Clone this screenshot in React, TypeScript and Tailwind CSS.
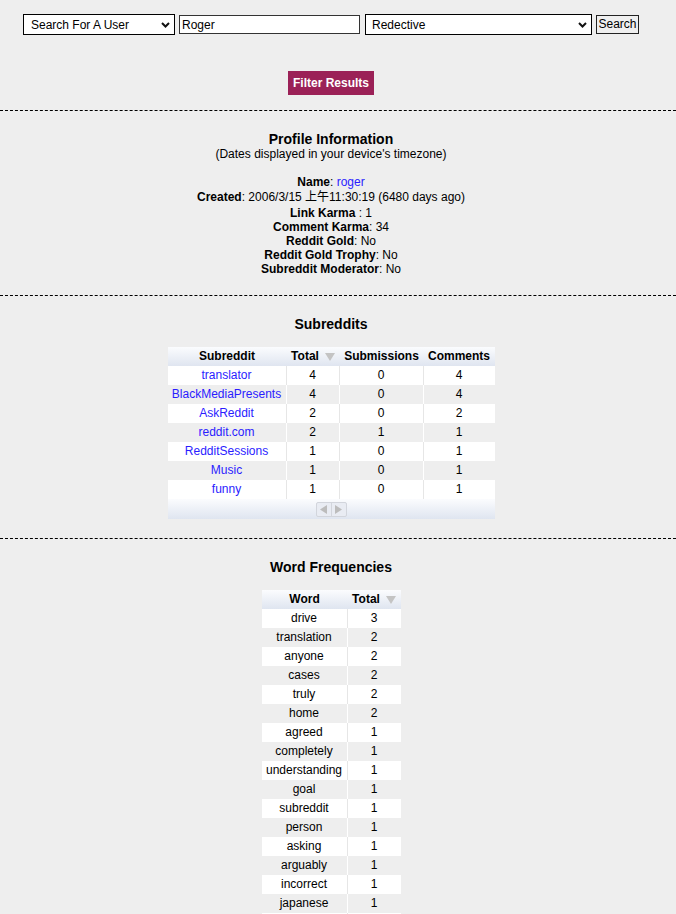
import React from "react";

const subreddits = [
  { name: "translator", total: 4, subs: 0, comments: 4 },
  { name: "BlackMediaPresents", total: 4, subs: 0, comments: 4 },
  { name: "AskReddit", total: 2, subs: 0, comments: 2 },
  { name: "reddit.com", total: 2, subs: 1, comments: 1 },
  { name: "RedditSessions", total: 1, subs: 0, comments: 1 },
  { name: "Music", total: 1, subs: 0, comments: 1 },
  { name: "funny", total: 1, subs: 0, comments: 1 },
];

const words: [string, number][] = [
  ["drive", 3],
  ["translation", 2],
  ["anyone", 2],
  ["cases", 2],
  ["truly", 2],
  ["home", 2],
  ["agreed", 1],
  ["completely", 1],
  ["understanding", 1],
  ["goal", 1],
  ["subreddit", 1],
  ["person", 1],
  ["asking", 1],
  ["arguably", 1],
  ["incorrect", 1],
  ["japanese", 1],
  ["language", 1],
  ["write", 1],
];

function Chevron() {
  return (
    <svg
      className="pointer-events-none absolute right-[5px] top-[8px]"
      width="9"
      height="6"
      viewBox="0 0 9 6"
    >
      <path d="M1 1l3.5 3.5L8 1" fill="none" stroke="#111" strokeWidth="2" />
    </svg>
  );
}

function SortArrow() {
  return (
    <svg width="10" height="8" viewBox="0 0 10 8" className="ml-[6px] inline-block">
      <polygon points="0,0 10,0 5,8" fill="#c4c4c4" />
    </svg>
  );
}

function Rule() {
  return <div className="h-0 w-full border-t border-dashed border-black" />;
}

function Line({ label, children }: { label: string; children: React.ReactNode }) {
  return (
    <div className="leading-[14px]">
      <span className="font-bold">{label}</span>
      {children}
    </div>
  );
}

const headBg = "bg-[linear-gradient(#fbfcfe,#dfe5f0)]";

export default function App() {
  return (
    <div className="min-h-screen bg-[#eeeeee] font-['Liberation_Sans','Noto_Sans_CJK_SC',sans-serif] text-[12px] text-black">
      {/* search form */}
      <div className="flex items-start pl-[23px] pt-[14px]">
        <div className="relative">
          <select className="h-[21px] w-[152px] appearance-none border border-black bg-white pl-[7px] text-[12px] outline-none">
            <option>Search For A User</option>
          </select>
          <Chevron />
        </div>
        <input
          className="ml-[4px] mt-[1px] h-[19px] w-[181px] border border-[#333] bg-white px-[2px] text-[12px] outline-none"
          defaultValue="Roger"
        />
        <div className="relative ml-[5px]">
          <select className="h-[21px] w-[227px] appearance-none border border-black bg-white pl-[6px] text-[12px] outline-none">
            <option>Redective</option>
          </select>
          <Chevron />
        </div>
        <button className="ml-[4px] mt-[1px] h-[19px] w-[43px] border border-[#222] bg-[#efefef] text-[12px] leading-[17px]">
          Search
        </button>
      </div>

      <div className="flex w-[662px] justify-center pt-[36px] pb-[15px]">
        <button className="h-[24px] bg-[#9b2157] px-[5px] text-[12px] font-bold leading-[24px] text-white">
          Filter Results
        </button>
      </div>

      <Rule />

      {/* profile */}
      <div className="w-[662px] pt-[20px] pb-[19px] text-center">
        <div className="text-[14px] font-bold leading-[16px]">Profile Information</div>
        <div className="leading-[14px]">(Dates displayed in your device's timezone)</div>
        <div className="h-[14px]" />
        <Line label="Name">
          : <span className="text-[#2a1cff]">roger</span>
        </Line>
        <div className="leading-[17px]">
          <span className="font-bold">Created</span>: 2006/3/15 上午11:30:19 (6480 days ago)
        </div>
        <Line label="Link Karma">&nbsp;: 1</Line>
        <Line label="Comment Karma">: 34</Line>
        <Line label="Reddit Gold">: No</Line>
        <Line label="Reddit Gold Trophy">: No</Line>
        <Line label="Subreddit Moderator">: No</Line>
      </div>

      <Rule />

      {/* subreddits */}
      <div className="flex w-[662px] flex-col items-center pt-[20px] pb-[19px]">
        <div className="text-[14px] font-bold leading-[16px]">Subreddits</div>
        <div className="mt-[15px] w-[327px]">
          <div className={`grid grid-cols-[119px_53px_84px_71px] font-bold leading-[19px] ${headBg}`}>
            <div className="text-center">Subreddit</div>
            <div className="flex items-center justify-center">
              Total
              <SortArrow />
            </div>
            <div className="text-center">Submissions</div>
            <div className="text-center">Comments</div>
          </div>
          {subreddits.map((s, i) => {
            const odd = i % 2 === 0;
            const sep = odd ? "border-r border-[#e6e6e6]" : "border-r border-white";
            return (
              <div
                key={s.name}
                className={`grid grid-cols-[119px_53px_84px_71px] text-center leading-[19px] ${odd ? "bg-white" : "bg-[#eeeeee]"}`}
              >
                <div className={`${sep} text-[#2a1cff]`}>{s.name}</div>
                <div className={sep}>{s.total}</div>
                <div className={sep}>{s.subs}</div>
                <div>{s.comments}</div>
              </div>
            );
          })}
          <div className={`flex h-[20px] items-center justify-center ${headBg}`}>
            <div className="flex h-[15px] w-[31px] rounded-[2px] border border-[#d2d5dc] bg-[#e9ecf3]">
              <div className="flex flex-1 items-center justify-center border-r border-[#d2d5dc]">
                <svg width="7" height="9" viewBox="0 0 7 9">
                  <polygon points="7,0 7,9 0,4.5" fill="#bcbcbc" />
                </svg>
              </div>
              <div className="flex flex-1 items-center justify-center">
                <svg width="7" height="9" viewBox="0 0 7 9">
                  <polygon points="0,0 0,9 7,4.5" fill="#bcbcbc" />
                </svg>
              </div>
            </div>
          </div>
        </div>
      </div>

      <Rule />

      {/* word frequencies */}
      <div className="flex w-[662px] flex-col items-center pt-[20px] pb-[20px]">
        <div className="text-[14px] font-bold leading-[16px]">Word Frequencies</div>
        <div className="mt-[15px] w-[139px]">
          <div className={`grid grid-cols-[86px_53px] font-bold leading-[19px] ${headBg}`}>
            <div className="text-center">Word</div>
            <div className="flex items-center justify-center">
              Total
              <SortArrow />
            </div>
          </div>
          {words.map(([w, n], i) => {
            const odd = i % 2 === 0;
            return (
              <div
                key={w}
                className={`grid grid-cols-[86px_53px] text-center leading-[19px] ${odd ? "bg-white" : "bg-[#eeeeee]"}`}
              >
                <div className={odd ? "border-r border-[#e6e6e6]" : "border-r border-white"}>{w}</div>
                <div>{n}</div>
              </div>
            );
          })}
        </div>
      </div>
    </div>
  );
}
